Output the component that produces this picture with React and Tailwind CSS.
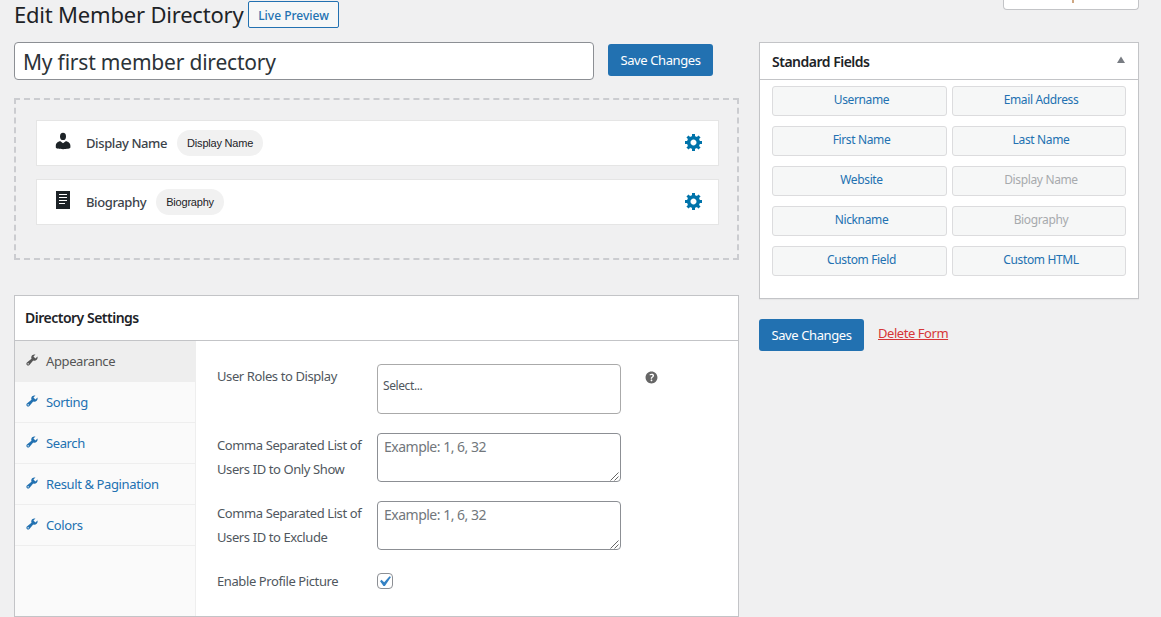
const fieldRows = [
  { label: "Display Name", tag: "Display Name", icon: "person" },
  { label: "Biography", tag: "Biography", icon: "page" },
];

const tabs = [
  "Appearance",
  "Sorting",
  "Search",
  "Result & Pagination",
  "Colors",
];

const standardFields = [
  { name: "Username" },
  { name: "Email Address" },
  { name: "First Name" },
  { name: "Last Name" },
  { name: "Website" },
  { name: "Display Name", used: true },
  { name: "Nickname" },
  { name: "Biography", used: true },
  { name: "Custom Field" },
  { name: "Custom HTML" },
];

function PersonIcon() {
  return (
    <svg viewBox="0 0 20 20" className="size-5 fill-[#1d2327]">
      <ellipse cx="10" cy="5.4" rx="3" ry="3.6" />
      <path d="M2.8 16.6v-1.9c0-2.2 2-4.4 4.6-4.4L10 12.2l2.7-1.9c2.6 0 4.7 2.2 4.7 4.4v1.9c0 1-3.6 1.6-7.3 1.6s-7.3-.6-7.3-1.6z" />
    </svg>
  );
}

function PageIcon() {
  return (
    <svg viewBox="0 0 20 20" className="size-5">
      <path d="M3 1h14v18H3z" fill="#1d2327" />
      <path
        d="M6 4.5h8M6 7.5h8M6 10.5h8M6 13.5h6"
        stroke="#fff"
        strokeWidth="1"
      />
    </svg>
  );
}

function GearIcon() {
  return (
    <svg viewBox="0 0 20 20" className="size-5 fill-[#0073aa]">
      <path d="M18 12h-2.18c-.17.7-.44 1.35-.81 1.93l1.54 1.54-2.1 2.1-1.54-1.54c-.58.36-1.23.63-1.91.79V19H8v-2.18c-.68-.16-1.33-.43-1.91-.79l-1.54 1.54-2.12-2.12 1.54-1.54c-.36-.58-.63-1.23-.79-1.91H1V9.03h2.17c.16-.7.44-1.35.8-1.94L2.43 5.55l2.1-2.1 1.54 1.54c.58-.37 1.24-.64 1.93-.81V2h3v2.18c.68.16 1.33.43 1.91.79l1.54-1.54 2.12 2.12-1.54 1.54c.36.59.64 1.24.8 1.94H18V12zm-8.5 1.5c1.66 0 3-1.34 3-3s-1.34-3-3-3-3 1.34-3 3 1.34 3 3 3z" />
    </svg>
  );
}

function WrenchIcon() {
  return (
    <svg viewBox="0 0 20 20" className="size-3.5 shrink-0 fill-current">
      <path d="M16.68 9.77c-1.34 1.34-3.3 1.67-4.95.99l-5.41 6.52c-.99.99-2.59.99-3.58 0s-.99-2.59 0-3.57l6.52-5.42c-.68-1.65-.35-3.61.99-4.95 1.28-1.28 3.12-1.62 4.72-1.06l-2.89 2.89 2.82 2.82 2.86-2.87c.53 1.58.18 3.39-1.08 4.65zM3.81 16.21c.4.39 1.04.39 1.43 0 .4-.4.4-1.04 0-1.43-.39-.4-1.03-.4-1.43 0-.39.39-.39 1.03 0 1.43z" />
    </svg>
  );
}

function HelpIcon() {
  return (
    <svg viewBox="0 0 20 20" className="size-[17px] fill-[#666]">
      <path d="M17 10c0-3.87-3.14-7-7-7-3.87 0-7 3.13-7 7s3.13 7 7 7c3.86 0 7-3.13 7-7zm-6.3 1.48H9.14v-.43c0-.38.08-.7.24-.98s.46-.57.88-.89c.41-.29.68-.53.81-.71.14-.18.2-.39.2-.62 0-.25-.09-.44-.28-.58-.19-.13-.45-.19-.79-.19-.58 0-1.25.19-2 .57l-.64-1.28c.87-.49 1.8-.74 2.77-.74.81 0 1.45.2 1.92.58.48.39.71.91.71 1.55 0 .43-.09.8-.29 1.11-.19.32-.57.67-1.11 1.06-.38.28-.61.49-.71.63-.1.15-.15.34-.15.57v.35zm-1.47 2.74c-.18-.17-.27-.42-.27-.73 0-.33.08-.58.26-.75s.43-.25.77-.25c.32 0 .57.09.75.26s.27.42.27.74c0 .3-.09.55-.27.72-.18.18-.43.27-.75.27-.33 0-.58-.09-.75-.26z" />
    </svg>
  );
}

function ExampleArea() {
  return (
    <div className="flex h-[49px] w-[244px] items-end justify-between rounded border border-[#8c8f94] bg-white pl-1.5">
      <span className="self-start pt-[3px] text-[14px] leading-5 tracking-[-0.5px] text-[#72777c]">
        Example: 1, 6, 32
      </span>
      <svg viewBox="0 0 10 10" className="size-2.5">
        <path d="M0.5 9.5l8-8M4.5 9.5l4-4" stroke="#555" strokeWidth="0.9" />
      </svg>
    </div>
  );
}

function FieldList() {
  return (
    <div className="mt-[18px] flex h-[162px] flex-col gap-[13px] border-2 border-dashed border-[#cbccd0] py-5 pr-[18px] pl-5">
      {fieldRows.map((row) => (
        <div
          key={row.label}
          className="flex h-[46px] items-center border border-[#e5e5e5] bg-white pr-3.5 pl-4"
        >
          <div className="pb-1">
            {row.icon === "person" ? <PersonIcon /> : <PageIcon />}
          </div>
          <span className="mt-0.5 ml-[13px] text-[13px] font-medium tracking-[-0.4px] text-[#3c434a]">
            {row.label}
          </span>
          <span className="ml-2.5 h-[26px] rounded-full bg-[#f1f1f1] px-2.5 font-['Liberation_Sans',sans-serif] text-[11px] leading-[26px] tracking-[-0.2px] text-[#1d2327]">
            {row.tag}
          </span>
          <div className="ml-auto pb-0.5">
            <GearIcon />
          </div>
        </div>
      ))}
    </div>
  );
}

function DirectorySettings() {
  return (
    <div className="mt-[35px] h-[322px] border border-[#c3c4c7] bg-white">
      <h2 className="h-[45px] border-b border-[#c3c4c7] pl-2.5 text-[14px] leading-[44px] font-semibold tracking-[-0.5px] text-[#1d2327]">
        Directory Settings
      </h2>

      <div className="flex h-[275px]">
        {/* Tabs */}
        <ul className="w-[181px] border-r border-[#eee] bg-[#fafafa] text-[13px] tracking-[-0.38px]">
          {tabs.map((tab, i) => (
            <li
              key={tab}
              className={`flex h-[41px] border-b border-[#eee] pl-2.5 ${
                i === 0 ? "bg-[#eee] text-[#555]" : "text-[#2271b1]"
              }`}
            >
              <div className="pt-3">
                <WrenchIcon />
              </div>
              <span className="ml-[7px] leading-[41px]">{tab}</span>
            </li>
          ))}
        </ul>

        {/* Options of the active tab */}
        <div className="pt-[23px] pl-[21px] text-[13px] leading-6 tracking-[-0.4px] text-[#50575e]">
          <div className="flex h-[69px]">
            <label className="w-40">User Roles to Display</label>
            <div className="h-[50px] w-[244px] rounded border border-[#aaa] bg-white pl-[5px] text-[12px] leading-[42px]">
              Select...
            </div>
            <div className="pt-[5px] pl-[21.5px]">
              <HelpIcon />
            </div>
          </div>

          <div className="flex h-[68px]">
            <label className="w-40">
              Comma Separated List of
              <br />
              Users ID to Only Show
            </label>
            <ExampleArea />
          </div>

          <div className="flex h-[68px]">
            <label className="w-40">
              Comma Separated List of
              <br />
              Users ID to Exclude
            </label>
            <ExampleArea />
          </div>

          <div className="flex">
            <label className="w-40">Enable Profile Picture</label>
            <div className="mt-1 flex size-4 items-center justify-center rounded border border-[#8c8f94] bg-white">
              <svg viewBox="0 0 20 20" className="mr-0.5 size-[21px] shrink-0">
                <path
                  d="M14.83 4.89l1.34.94-5.81 8.38H9.02L5.78 9.67l1.34-1.25 2.57 2.4z"
                  fill="#3582c4"
                />
              </svg>
            </div>
          </div>
        </div>
      </div>
    </div>
  );
}

function StandardFields() {
  return (
    <div className="h-[257px] border border-[#c3c4c7] bg-white shadow-[0_1px_1px_rgba(0,0,0,0.04)]">
      <div className="flex h-[37px] justify-between border-b border-[#c3c4c7] pr-[13px] pl-3">
        <h2 className="text-[14px] leading-[38px] font-semibold tracking-[-0.5px] text-[#1d2327]">
          Standard Fields
        </h2>
        <svg viewBox="0 0 8 8" className="mt-[13px] size-2 fill-[#787c82]">
          <path d="M4 0.5l4 6.5h-8z" />
        </svg>
      </div>

      <div className="grid grid-cols-[175px_174px] gap-x-[5px] gap-y-2.5 pt-1.5 pl-3">
        {standardFields.map((field) => (
          <button
            key={field.name}
            className={`h-[30px] rounded-[3px] border border-[#dcdcde] bg-[#f6f7f7] pb-0.5 pl-1 text-[12px] leading-[26px] tracking-[-0.36px] ${
              field.used ? "text-[#a7aaad]" : "text-[#2271b1]"
            }`}
          >
            {field.name}
          </button>
        ))}
      </div>
    </div>
  );
}

function App() {
  return (
    <div className="flex h-[617px] gap-5 overflow-hidden bg-[#f0f0f1] pl-3.5 font-['Noto_Sans','Open_Sans',sans-serif]">
      <div className="w-[725px]">
        <div className="flex h-[42px] items-start">
          <h1 className="w-[234px] text-[22px] leading-[29px] tracking-[-0.2px] whitespace-nowrap text-[#1d2327]">
            Edit Member Directory
          </h1>
          <button className="mt-px h-[27px] w-[91px] rounded-[2px] border border-[#2271b1] bg-[#f6f7f7] pt-0.5 text-[12px] font-medium whitespace-nowrap text-[#2271b1]">
            Live Preview
          </button>
        </div>

        <div className="flex h-[38px] items-center">
          <div className="h-[38px] w-[580px] rounded border border-[#8c8f94] bg-white pl-2 text-[21px] leading-[38px] tracking-[-0.2px] text-[#2c3338]">
            My first member directory
          </div>
          <button className="mt-[-2px] ml-3.5 h-8 w-[105px] rounded-[3px] bg-[#2271b1] pt-0.5 text-[13px] tracking-[-0.4px] text-white">
            Save Changes
          </button>
        </div>

        <FieldList />
        <DirectorySettings />
      </div>

      <div className="w-[380px]">
        <div className="flex h-[42px] items-start justify-end">
          {/* Bottom edge of the screen options tab */}
          <div className="h-2.5 w-[136px] rounded-b border border-t-0 border-[#c3c4c7] bg-white pl-[68px]">
            <div className="h-[3px] w-0.5 bg-[#cfa883]" />
          </div>
        </div>

        <StandardFields />

        <div className="mt-5 flex">
          <button className="h-8 w-[105px] rounded-[3px] bg-[#2271b1] pt-0.5 text-[13px] tracking-[-0.4px] text-white">
            Save Changes
          </button>
          <a className="ml-3.5 text-[13px] leading-7 tracking-[-0.45px] text-[#d63638] underline">
            Delete Form
          </a>
        </div>
      </div>
    </div>
  );
}

export default App;
